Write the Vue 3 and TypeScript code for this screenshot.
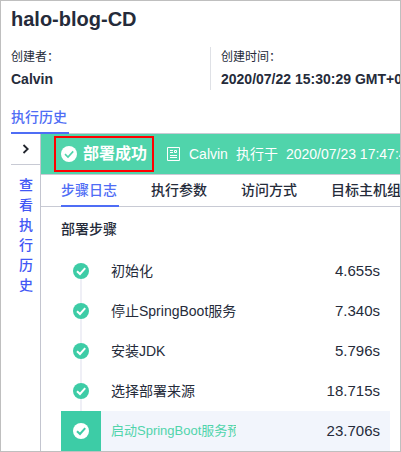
<script setup lang="ts">
import { ref } from 'vue'

interface Step {
  name: string
  time: string
}

const tabs: string[] = ['步骤日志', '执行参数', '访问方式', '目标主机组']
const steps: Step[] = [
  { name: '初始化', time: '4.655s' },
  { name: '停止SpringBoot服务', time: '7.340s' },
  { name: '安装JDK', time: '5.796s' },
  { name: '选择部署来源', time: '18.715s' },
  { name: '启动SpringBoot服务预', time: '23.706s' },
]
const activeTab = ref(0)
const activeStep = ref(4)
</script>

<template>
  <main class="page">
    <h1 class="title">halo-blog-CD</h1>
    <dl class="meta">
      <div class="meta-item">
        <dt>创建者：</dt>
        <dd>Calvin</dd>
      </div>
      <div class="meta-item">
        <dt>创建时间：</dt>
        <dd>2020/07/22 15:30:29 GMT+0</dd>
      </div>
    </dl>

    <nav class="main-tabs">
      <a class="main-tab" href="#history">执行历史</a>
    </nav>

    <div class="body">
      <aside class="rail">
        <button class="expand" type="button" aria-label="展开">
          <svg width="8" height="10" viewBox="0 0 8 10">
            <path d="M1.5 1 5.7 5 1.5 9" fill="none" stroke="#20242c" stroke-width="1.8" />
          </svg>
        </button>
        <a class="rail-link" href="#all">查看执行历史</a>
      </aside>

      <section class="detail">
        <header class="status">
          <strong class="result">
            <svg width="16" height="16" viewBox="0 0 16 16">
              <circle cx="8" cy="8" r="8" fill="#fff" />
              <path d="M4 8.2 7 11 12.2 5.4" fill="none" stroke="#50d4ab" stroke-width="1.6" />
            </svg>
            <span>部署成功</span>
          </strong>
          <svg class="doc" width="14" height="14" viewBox="0 0 14 14" fill="none" stroke="#fff">
            <path d="M.5.5h12v13H.5zM3 3.5h3M3 5.5h3M7.5 3.5h2v2h-2zM3 8.5h7M3 10.5h7" />
          </svg>
          <span class="run">Calvin</span>
          <span class="run">执行于</span>
          <span class="run">2020/07/23 17:47:4</span>
        </header>

        <nav class="tabs">
          <button
            v-for="(tab, i) in tabs"
            :key="tab"
            type="button"
            class="tab"
            :class="{ active: i === activeTab }"
            @click="activeTab = i"
          >{{ tab }}</button>
        </nav>

        <h2 class="heading">部署步骤</h2>
        <ol class="steps">
          <li
            v-for="(step, i) in steps"
            :key="step.name"
            class="step"
            :class="{ active: i === activeStep }"
            @click="activeStep = i"
          >
            <span class="marker">
              <svg width="16" height="16" viewBox="0 0 16 16">
                <circle class="disc" cx="8" cy="8" r="8" />
                <path class="tick" d="M4 8.2 7 11 12.2 5.2" fill="none" stroke-width="2" />
              </svg>
            </span>
            <span class="name">{{ step.name }}</span>
            <span class="time">{{ step.time }}</span>
          </li>
        </ol>
      </section>
    </div>
  </main>
</template>

<style>
body {
  background: #fff;
}
</style>

<style scoped>
.page {
  box-sizing: border-box;
  min-height: 100vh;
  padding: 6px 0 0 10px;
  border: 1px solid #bfbfbf;
  overflow: hidden;
  color: #252b3a;
  font-family: "Liberation Sans", "Noto Sans CJK SC", sans-serif;
  font-size: 14px;
  line-height: 20px;
}
.title {
  margin: 0;
  font-size: 20px;
  line-height: 24px;
}
.meta {
  display: grid;
  grid-template-columns: 199px 1fr;
  margin: 16px 0 0;
}
.meta-item {
  min-width: 0;
  height: 43px;
  white-space: nowrap;
}
.meta-item + .meta-item {
  padding-left: 10px;
  border-left: 1px solid #dfe1e6;
}
.meta dt {
  font-size: 12px;
}
.meta dd {
  margin: 2px 0 0;
  font-weight: bold;
}
.main-tabs {
  display: flex;
  margin-top: 17px;
  border-bottom: 1px solid #c8cad4;
}
.main-tab {
  width: 58px;
  height: 25px;
  margin-bottom: -1px;
  border-bottom: 2px solid #4f6df5;
  color: #4f6df5;
  font-weight: 500;
  text-decoration: none;
}
.body {
  display: flex;
}
.rail {
  flex: none;
  width: 29px;
}
.expand {
  display: flex;
  align-items: center;
  justify-content: center;
  width: 100%;
  height: 31px;
  padding: 0;
  border: 0;
  border-bottom: 1px solid #c8cad4;
  background: none;
}
.rail-link {
  display: block;
  width: 14px;
  margin: 10px auto 0 8px;
  color: #4257f5;
  font-weight: 500;
  text-decoration: none;
  word-break: break-all;
}
.detail {
  flex: 1;
  min-width: 0;
  border-left: 1px solid #c3c5cf;
}
.status {
  display: flex;
  align-items: center;
  height: 40px;
  padding-left: 13px;
  border-bottom: 1px solid #c8cad4;
  background: #50d4ab;
  color: #fff;
  white-space: nowrap;
}
.result {
  display: flex;
  align-items: center;
  gap: 6px;
  box-sizing: border-box;
  flex: none;
  width: 100px;
  height: 36px;
  padding-left: 5px;
  border: 2px solid #f00;
  font-size: 16px;
}
.doc {
  flex: none;
  margin-left: 13px;
}
.run {
  margin-left: 8px;
}
.tabs {
  display: flex;
  gap: 32px;
  height: 31px;
  padding-left: 20px;
  border-bottom: 1px solid #c8cad4;
}
.tab {
  flex: none;
  box-sizing: border-box;
  height: 32px;
  padding: 0 2px 0 0;
  border: 0;
  border-bottom: 2px solid transparent;
  background: none;
  color: #252b3a;
  font: inherit;
  font-weight: 500;
}
.tab.active {
  border-color: #4f6df5;
  color: #4f6df5;
}
.heading {
  margin: 12px 0 0 20px;
  font-size: 14px;
  font-weight: 500;
}
.steps {
  margin: 12px 10px 0 20px;
  padding: 0;
  list-style: none;
}
.step {
  display: flex;
  align-items: center;
  height: 40px;
}
.marker {
  display: flex;
  flex-direction: column;
  align-items: center;
  width: 40px;
  height: 40px;
}
.marker::before,
.marker::after {
  flex: 1;
  width: 2px;
  background: #efeff6;
  content: "";
}
.step:first-child .marker::before,
.step.active .marker::before,
.step.active .marker::after {
  background: none;
}
.disc {
  fill: #3dcca6;
}
.tick {
  stroke: #fff;
}
.name {
  width: 125px;
  margin-left: 10px;
  overflow: hidden;
  white-space: nowrap;
}
.time {
  margin-left: auto;
  padding-right: 10px;
  font-size: 15px;
}
.step.active {
  background: #f2f5fc;
}
.step.active .marker {
  background: #3dcca6;
}
.step.active .disc {
  fill: #fff;
}
.step.active .tick {
  stroke: #3dcca6;
}
.step.active .name {
  color: #50d4ab;
  font-size: 13px;
}
</style>
